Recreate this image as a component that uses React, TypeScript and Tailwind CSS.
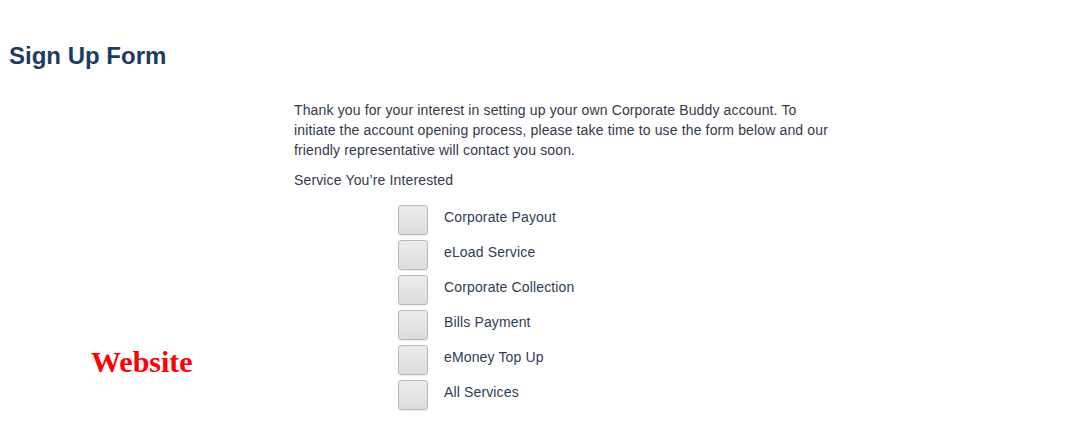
import { useState } from 'react'

const services = [
  'Corporate Payout',
  'eLoad Service',
  'Corporate Collection',
  'Bills Payment',
  'eMoney Top Up',
  'All Services',
]

export default function App() {
  const [checked, setChecked] = useState<Record<string, boolean>>({})

  return (
    <div className="w-[1070px] h-[423px] bg-white overflow-hidden font-['Liberation_Sans',Arial,sans-serif]">
      <h1 className="pt-[42px] pl-[9px] text-[24px] leading-[28px] font-bold text-[#1d3b63]">
        Sign Up Form
      </h1>

      <div className="flex mt-[30px]">
        {/* left column */}
        <div className="w-[294px] shrink-0 pt-[245px] pl-[91px]">
          <span className="font-['Liberation_Serif','Times_New_Roman',serif] font-bold text-[30px] leading-[34px] text-[#ff0000]">
            Website
          </span>
        </div>

        {/* form column */}
        <div className="w-[580px] text-[14px] leading-[20px] tracking-[0.14px] text-[#34394a]">
          <p>
            Thank you for your interest in setting up your own Corporate Buddy account. To
            <br />
            initiate the account opening process, please take time to use the form below and our
            <br />
            friendly representative will contact you soon.
          </p>
          <p className="mt-[10px]">Service You’re Interested</p>

          <ul className="mt-[15px] pl-[104px] flex flex-col gap-[5px]">
            {services.map((s) => (
              <li key={s} className="flex items-start h-[30px]">
                <button
                  onClick={() => setChecked((c) => ({ ...c, [s]: !c[s] }))}
                  className="w-[30px] h-[30px] rounded-[3px] border border-[#b9b9b9] bg-gradient-to-b from-[#ececec] to-[#dcdcdc] shadow-[0_1px_1px_rgba(0,0,0,0.08)] flex items-center justify-center text-[#333]"
                >
                  {checked[s] ? '✓' : ''}
                </button>
                <span className="ml-[16px] mt-[2px] text-[#2f3d55]">{s}</span>
              </li>
            ))}
          </ul>
        </div>
      </div>
    </div>
  )
}
